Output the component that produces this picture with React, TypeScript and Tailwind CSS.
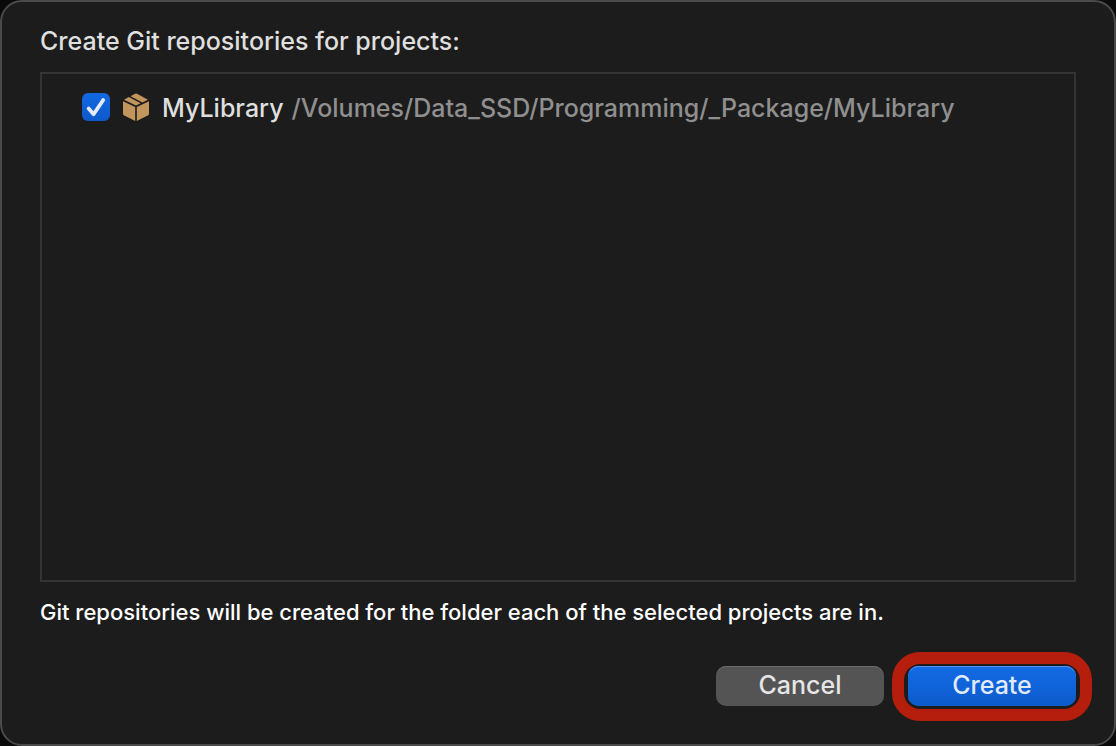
import { useState } from "react";

function PackageIcon() {
  return (
    <svg viewBox="0 0 28 30" className="h-[30px] w-7 shrink-0" fill="#c2955c" aria-hidden="true">
      <path d="M1 9.2 13.2 15V29.1L2.3 23.6Q1 22.9 1 21.4Z" />
      <path d="M27 9.2 14.8 15V29.1L25.7 23.6Q27 22.9 27 21.4Z" />
      <path d="M2 7.8 6.8 5.1 18.6 11.3 14 13.5Z" />
      <path d="M8.5 4.2 13 1.7Q14 1.2 15 1.7L26 7.8 20.4 10.4Z" />
    </svg>
  );
}

function ProjectRow({ name, path }: { name: string; path: string }) {
  const [checked, setChecked] = useState(true);
  return (
    <li>
      <label className="flex items-center text-[25px] leading-8 font-medium whitespace-nowrap">
        <span className="grid shrink-0">
          <input
            type="checkbox"
            checked={checked}
            onChange={(e) => setChecked(e.target.checked)}
            className="peer col-start-1 row-start-1 size-7 appearance-none rounded-md bg-[#555] checked:bg-linear-to-b checked:from-[#1268e2] checked:to-[#0d5acb]"
          />
          <svg
            viewBox="0 0 28 28"
            className="pointer-events-none invisible col-start-1 row-start-1 size-7 peer-checked:visible"
            fill="none"
            stroke="#e3ecfa"
            strokeWidth="3.8"
            strokeLinecap="round"
            strokeLinejoin="round"
            aria-hidden="true"
          >
            <path d="M6.6 15.6 11.6 21.2 21.2 7" />
          </svg>
        </span>
        <span className="ml-3 flex">
          <PackageIcon />
        </span>
        <span className="ml-3 pt-0.5 text-[#dfdfdf]">{name}</span>
        <span className="ml-2 pt-0.5 text-[#8f8f8f]">{path}</span>
      </label>
    </li>
  );
}

export default function App() {
  return (
    <div className="min-h-screen bg-[#0a0a0a] font-['Inter',sans-serif]">
      <main className="flex min-h-screen flex-col rounded-[22px] border-2 border-[#4a4a4a] bg-[#1c1c1c] px-[38px] pt-[23px] pb-[38px]">
        <h1 className="text-[25px] leading-8 font-medium text-[#dfdfdf]">Create Git repositories for projects:</h1>
        <ul className="mt-[15px] flex-1 border-2 border-[#343434] px-10 py-4">
          <ProjectRow name="MyLibrary" path="/Volumes/Data_SSD/Programming/_Package/MyLibrary" />
        </ul>
        <p className="mt-4 text-[22px] leading-7 font-medium text-white">
          Git repositories will be created for the folder each of the selected projects are in.
        </p>
        <div className="mt-10 flex justify-end gap-6">
          <button
            type="button"
            className="h-10 w-[168px] rounded-[10px] bg-[#545454] pb-0.5 text-[25px] leading-8 font-medium text-[#e6e6e6] shadow-[inset_0_1px_0_#6c6c6c]"
          >
            Cancel
          </button>
          <div className="relative">
            <button
              type="button"
              className="h-10 w-[168px] rounded-[10px] bg-linear-to-b from-[#126be6] to-[#0e5bcb] pb-0.5 text-[25px] leading-8 font-medium text-[#e1ebfa] shadow-[inset_0_1px_0_#5292ec]"
            >
              Create
            </button>
            <span className="pointer-events-none absolute -inset-x-4 -top-[14px] -bottom-[15px] rounded-[28px] border-12 border-[#b51d0c]" />
          </div>
        </div>
      </main>
    </div>
  );
}
